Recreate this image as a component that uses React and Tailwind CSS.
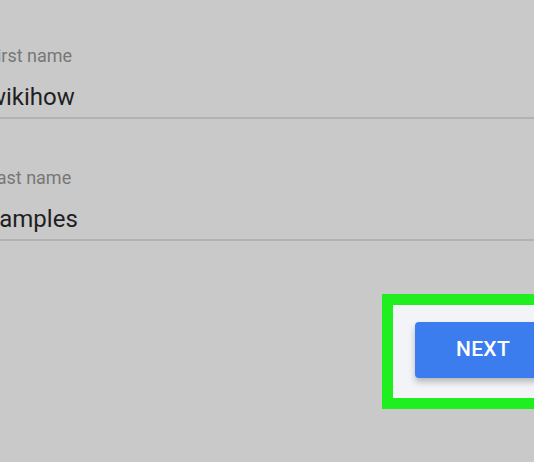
import React from 'react';

const Field = ({ label, value, labelShift, valueShift, className = '' }) => (
    <div className={`flex flex-col border-b-2 border-[#b2b2b2] pb-[8px] ${className}`}>
        <span className={`text-[18px] leading-[18px] text-[#777777] whitespace-nowrap ${labelShift}`}>{label}</span>
        <span className={`mt-[20px] text-[24px] leading-[24px] text-[#1f1f1f] whitespace-nowrap ${valueShift}`}>{value}</span>
    </div>
);

export default function App() {
    return (
        <div className="w-[534px] h-[462px] overflow-hidden bg-[#c9c9c9] font-['Roboto',sans-serif]">
            <div className="flex flex-col pt-[47px]">
                {/* Name fields, cut off at the left edge */}
                <Field label="First name" value="wikihow" labelShift="-ml-[13px]" valueShift="-ml-[12px]" />
                <Field label="Last name" value="Samples" labelShift="-ml-[13px]" valueShift="-ml-[15px]" className="mt-[50px]" />

                {/* Highlighted next button */}
                <div className="flex justify-end mt-[53px]">
                    <div className="-mr-[18px] w-[170px] border-[11px] border-[#1fee1f] bg-[#f3f4f8] pl-[22px] pt-[17px] pb-[20px]">
                        <button className="w-[136px] h-[56px] rounded-[4px] bg-[#3b7cee] text-white text-[21px] font-medium tracking-[0.3px] shadow-[0_4px_6px_rgba(0,0,0,0.25)]">
                            NEXT
                        </button>
                    </div>
                </div>
            </div>
        </div>
    );
}
